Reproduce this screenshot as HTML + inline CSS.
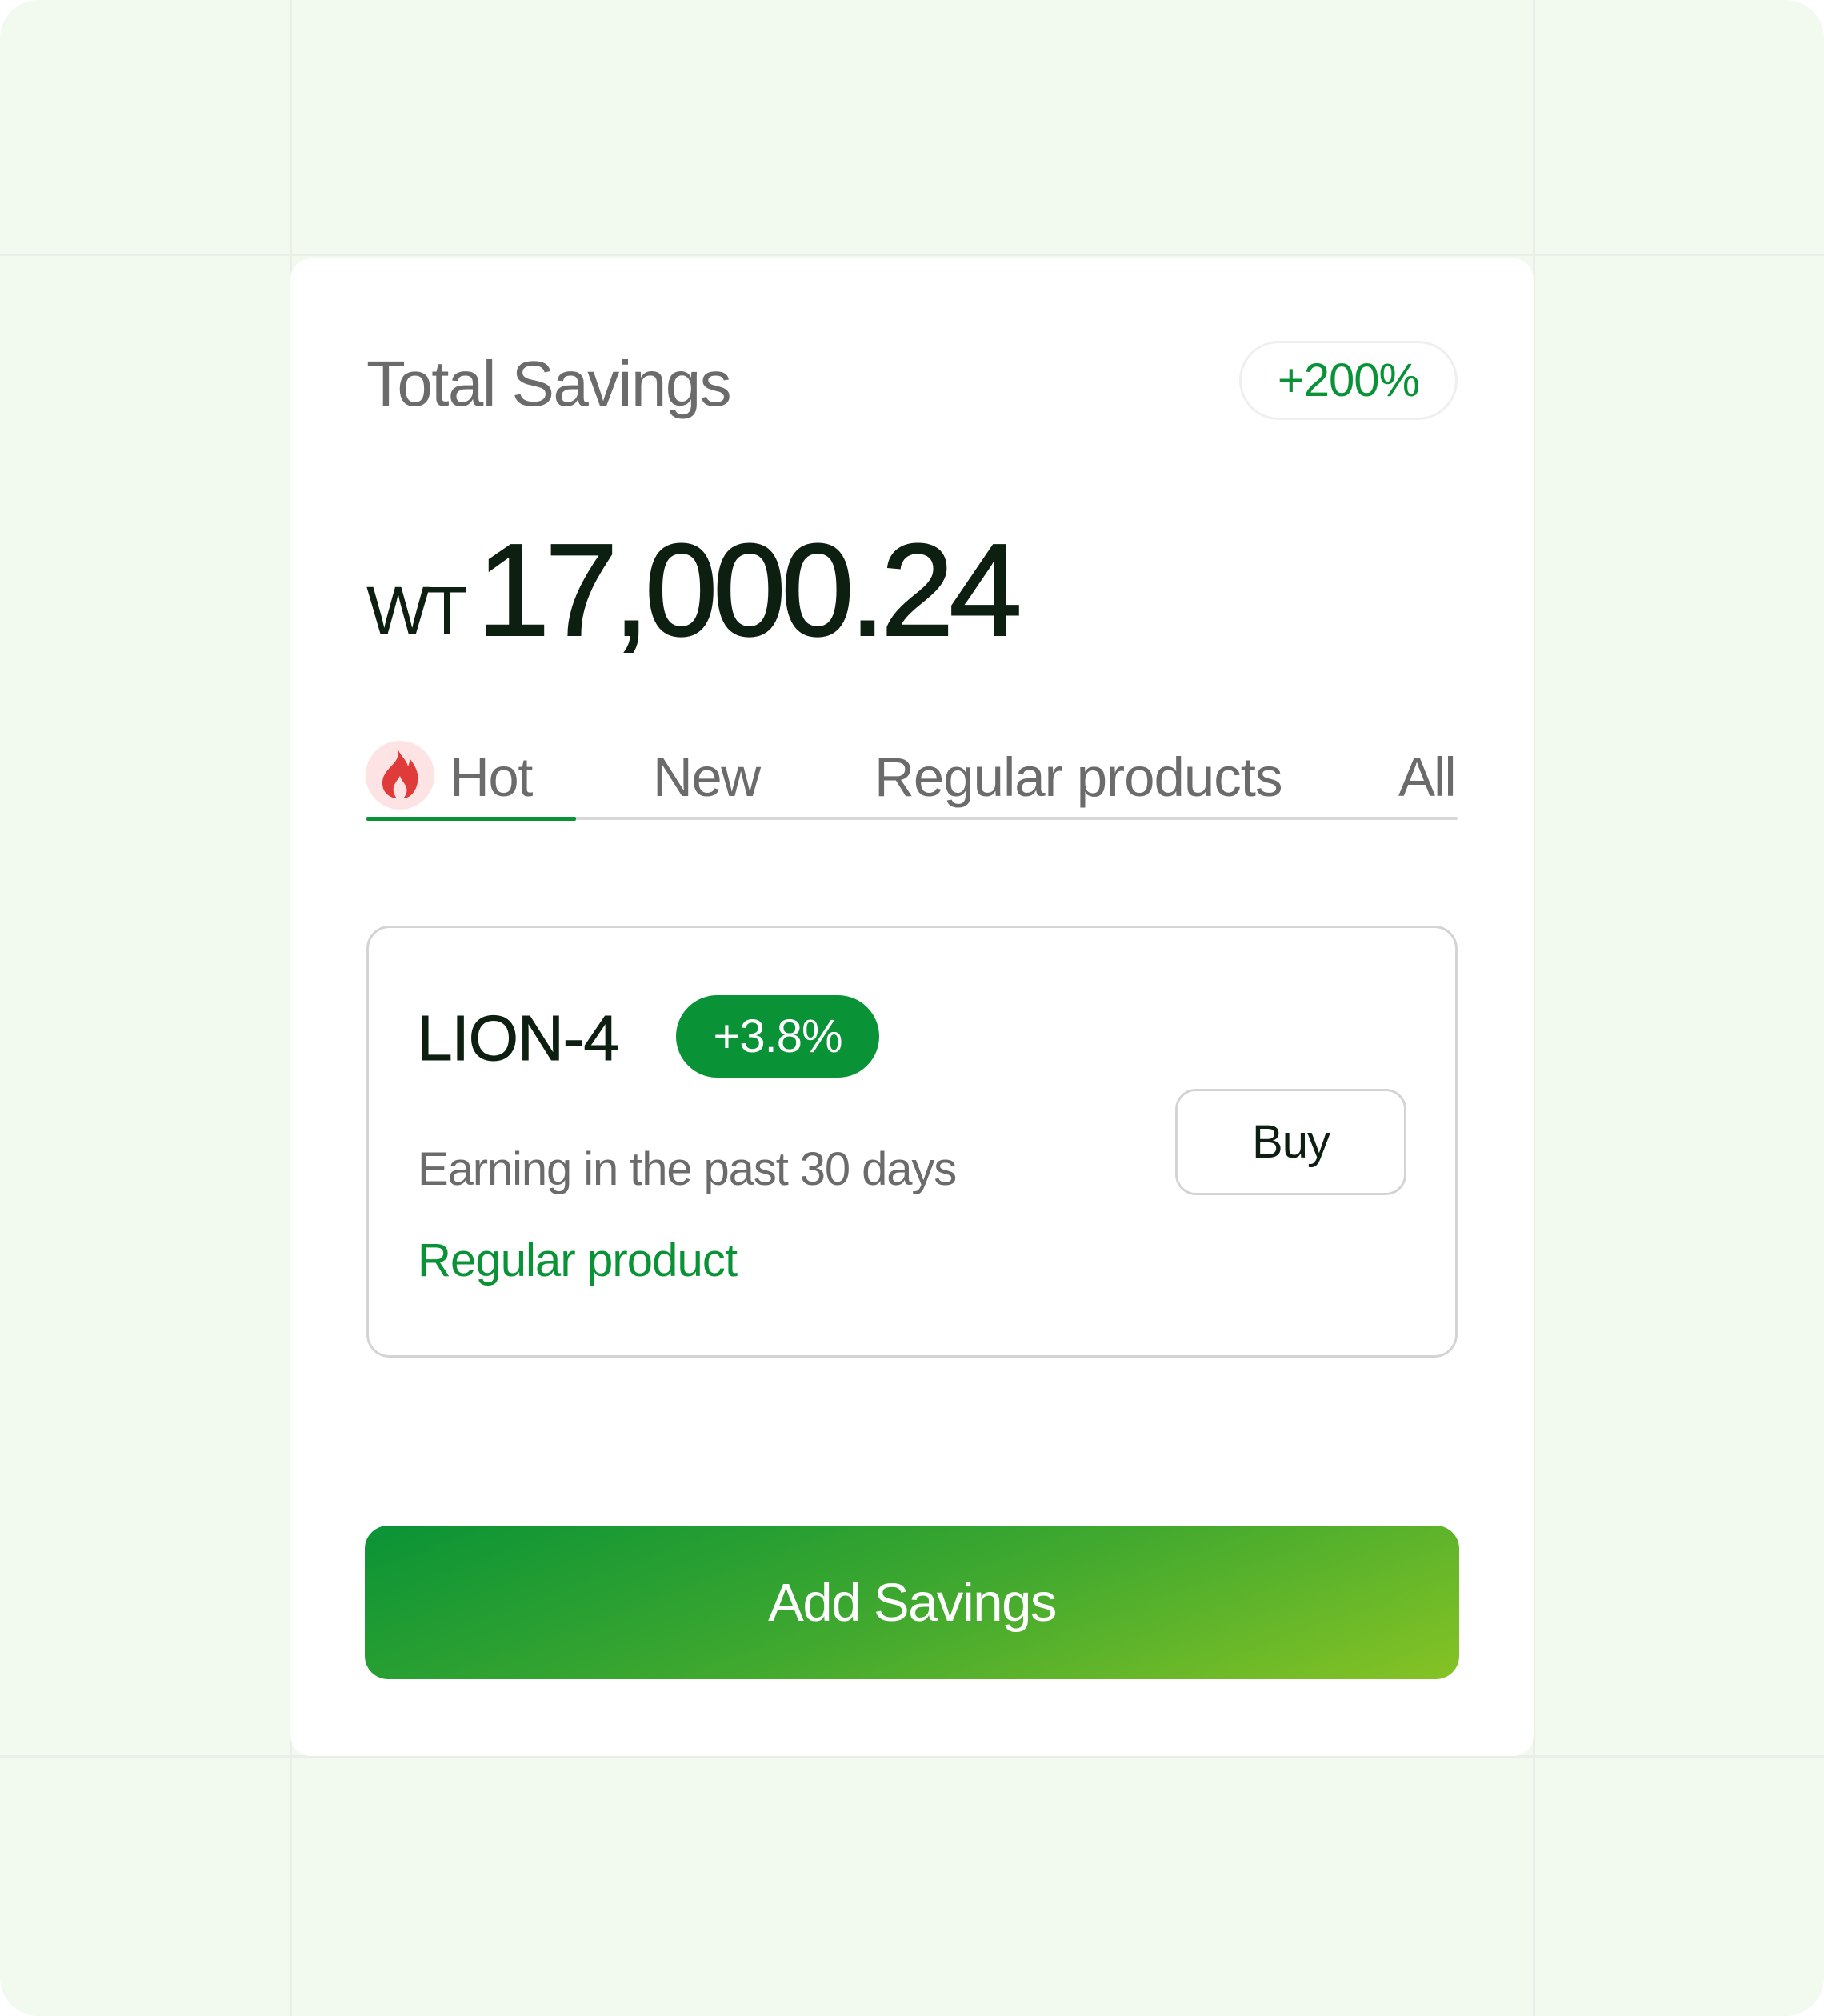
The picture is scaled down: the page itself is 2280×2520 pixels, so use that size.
<!DOCTYPE html>
<html><head><meta charset="utf-8"><style>
*{margin:0;padding:0;box-sizing:border-box}
html{background:#fff}
body{width:2280px;height:2520px;background:#f2f9ef;position:relative;overflow:hidden;font-family:"Liberation Sans",sans-serif;border-radius:48px}
.abs{position:absolute;white-space:nowrap;line-height:1}
.vl{position:absolute;top:0;width:3px;height:2520px;background:#e9efe8}
.hl{position:absolute;left:0;height:3px;width:2280px;background:#e9efe8}
.card{position:absolute;left:363px;top:323px;width:1554px;height:1872px;background:#fff;border-radius:26px}
</style></head><body>
<div class="vl" style="left:362px"></div>
<div class="vl" style="left:1916px"></div>
<div class="hl" style="top:317px"></div>
<div class="hl" style="top:2194px"></div>
<div class="card"></div>

<div class="abs" style="left:458px;top:440px;font-size:80px;color:#6b6b6b;letter-spacing:-1.6px">Total Savings</div>
<div class="abs" style="left:1549px;top:426px;width:273px;height:99px;border:3px solid #efefef;border-radius:50px;display:flex;align-items:center;justify-content:center;font-size:58px;color:#0a9336;letter-spacing:-1px">+200%</div>

<div class="abs" style="left:458px;top:721px;font-size:84px;color:#0d1f10;letter-spacing:-4px">WT</div>
<div class="abs" style="left:596px;top:656px;font-size:164px;color:#0d1f10;letter-spacing:-6px;-webkit-text-stroke:2px #0d1f10">17,000.24</div>

<div class="abs" style="left:457px;top:926px;width:86px;height:86px;border-radius:50%;background:#fde3e3"></div>
<svg class="abs" style="left:476px;top:936px" width="48" height="64" viewBox="0 0 48 64">
<path d="M22 2 C26 10 32 14 34 22 C36 18 36 15 36 12 C44 22 48 32 46 42 C44 54 36 62 28 62 C32 58 34 52 31 46 C29 42 26 40 24 34 C20 40 17 44 16 48 C15 54 17 58 20 62 C10 61 2 54 2 43 C2 30 12 24 18 16 C21 12 22 7 22 2 Z" fill="#e03b3b"/>
</svg>
<div class="abs" style="left:562px;top:937px;font-size:69px;color:#6b6b6b;letter-spacing:-1.5px">Hot</div>
<div class="abs" style="left:816px;top:937px;font-size:69px;color:#6b6b6b;letter-spacing:-1.5px">New</div>
<div class="abs" style="left:1093px;top:937px;font-size:69px;color:#6b6b6b;letter-spacing:-1px">Regular products</div>
<div class="abs" style="left:1748px;top:937px;font-size:69px;color:#6b6b6b;letter-spacing:-2px">All</div>
<div class="abs" style="left:458px;top:1021px;width:1364px;height:4px;background:#d8d8d8;border-radius:2px"></div>
<div class="abs" style="left:458px;top:1021px;width:262px;height:5px;background:#0a9336;border-radius:2px"></div>

<div class="abs" style="left:458px;top:1157px;width:1364px;height:540px;border:3px solid #d4d4d4;border-radius:29px"></div>
<div class="abs" style="left:521px;top:1258px;font-size:80px;color:#0d1f10;letter-spacing:-1px;-webkit-text-stroke:1px #0d1f10">LION-4</div>
<div class="abs" style="left:845px;top:1244px;width:254px;height:103px;background:#0a9336;border-radius:52px;display:flex;align-items:center;justify-content:center;font-size:58px;color:#fff;letter-spacing:-1px">+3.8%</div>
<div class="abs" style="left:522px;top:1433px;font-size:58px;color:#6b6b6b;letter-spacing:-1.1px">Earning in the past 30 days</div>
<div class="abs" style="left:522px;top:1547px;font-size:58px;color:#0a9336;letter-spacing:-0.9px">Regular product</div>
<div class="abs" style="left:1469px;top:1361px;width:289px;height:133px;border:3px solid #d4d4d4;border-radius:26px;display:flex;align-items:center;justify-content:center;font-size:58px;color:#0d1f10;letter-spacing:-1px">Buy</div>

<div class="abs" style="left:456px;top:1907px;width:1368px;height:192px;border-radius:29px;background:linear-gradient(160deg,#0a9336 0%,#3fa82f 50%,#86c325 100%);display:flex;align-items:center;justify-content:center;font-size:67px;color:#fff;letter-spacing:-1.5px">Add Savings</div>
</body></html>
